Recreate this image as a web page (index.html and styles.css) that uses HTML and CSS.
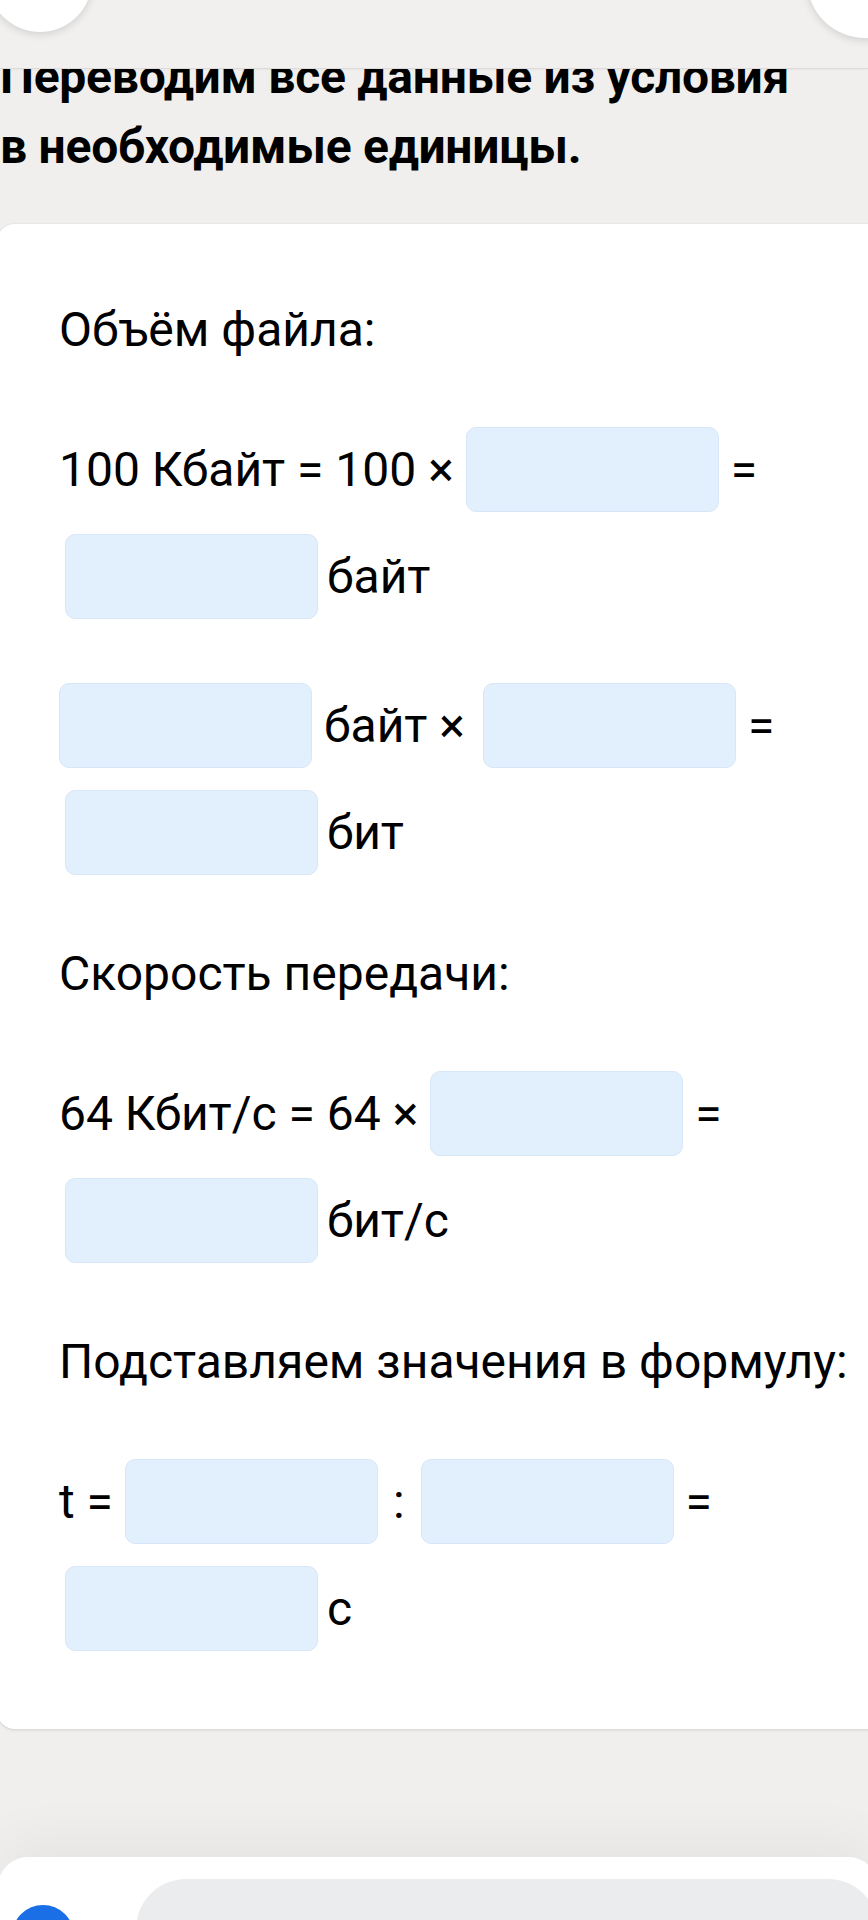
FILE: index.html
```html
<!DOCTYPE html>
<html lang="ru">
<head>
<meta charset="utf-8">
<title>Перевод единиц</title>
<link rel="stylesheet" href="styles.css">
</head>
<body>
<div class="topbar">
  <span class="circle circle-left"></span>
  <span class="circle circle-right"></span>
</div>

<h2 class="intro">Переводим все данные из условия<br>в необходимые единицы.</h2>

<section class="card">
  <p class="label">Объём файла:</p>
  <div class="eq">
    <div class="row"><span class="t">100 Кбайт = 100 ×</span><span class="blank"></span><span class="t">=</span></div>
    <div class="row cont"><span class="blank"></span><span class="t">байт</span></div>
  </div>
  <div class="eq">
    <div class="row"><span class="blank"></span><span class="t t-wide">байт ×</span><span class="blank"></span><span class="t">=</span></div>
    <div class="row cont"><span class="blank"></span><span class="t">бит</span></div>
  </div>

  <p class="label">Скорость передачи:</p>
  <div class="eq">
    <div class="row"><span class="t">64 Кбит/с = 64 ×</span><span class="blank"></span><span class="t">=</span></div>
    <div class="row cont"><span class="blank"></span><span class="t">бит/с</span></div>
  </div>

  <p class="label">Подставляем значения в формулу:</p>
  <div class="eq">
    <div class="row"><span class="t">t =</span><span class="blank"></span><span class="t colon">:</span><span class="blank"></span><span class="t">=</span></div>
    <div class="row cont"><span class="blank"></span><span class="t">с</span></div>
  </div>
</section>

<div class="bottombar">
  <span class="avatar"></span>
  <span class="pill"></span>
</div>
</body>
</html>
```

FILE: styles.css
```css
* { box-sizing: border-box; }

html, body {
  margin: 0;
  padding: 0;
}

body {
  width: 868px;
  height: 1920px;
  overflow: hidden;
  position: relative;
  background: #f0efed;
  color: #000;
  font-family: Roboto, "Noto Sans", sans-serif;
}

.topbar {
  position: absolute;
  top: 0;
  left: 0;
  width: 868px;
  height: 69px;
  background: #f1f0ee;
  border-bottom: 1px solid #dcdbd9;
  box-shadow: 0 1px 2px rgba(0, 0, 0, 0.04);
  z-index: 5;
  overflow: hidden;
}

.circle {
  position: absolute;
  background: #fff;
  border-radius: 50%;
  box-shadow: 0 2px 8px rgba(0, 0, 0, 0.14);
}

.circle-left {
  width: 104px;
  height: 104px;
  left: -12px;
  top: -72px;
}

.circle-right {
  width: 116px;
  height: 116px;
  left: 807px;
  top: -78px;
}

.intro {
  margin: 0;
  padding: 42px 0 0 0;
  font-size: 48px;
  line-height: 70px;
  font-weight: 700;
  letter-spacing: -0.25px;
  white-space: nowrap;
}

.card {
  margin: 42px 0 0 -3px;
  width: 920px;
  background: #fff;
  border-radius: 18px;
  padding: 73px 0 67px 62px;
  box-shadow: 0 0 2px rgba(0, 0, 0, 0.12), 0 2px 3px rgba(0, 0, 0, 0.06);
}

.label {
  margin: 0;
  font-size: 48px;
  line-height: 65px;
  white-space: nowrap;
}

.eq {
  margin-top: 54px;
}

.eq + .eq {
  margin-top: 42px;
}

.eq + .label {
  margin-top: 55px;
}

.row {
  display: flex;
  align-items: center;
  gap: 12px;
  height: 107px;
  font-size: 48px;
}

.row.cont {
  padding-left: 6px;
  gap: 9px;
}

.t {
  white-space: nowrap;
}

.t-wide {
  margin-right: 6px;
}

.colon {
  margin: 0 4px 0 3px;
}

.blank {
  flex: none;
  width: 253px;
  height: 85px;
  background: #e2effc;
  border: 1px solid #d8e7f8;
  border-radius: 10px;
}

.bottombar {
  margin: 128px 0 0 -2px;
  width: 880px;
  height: 65px;
  background: #fff;
  border-radius: 30px 30px 0 0;
  box-shadow: 0 -20px 50px rgba(0, 0, 0, 0.045);
  display: flex;
  align-items: flex-start;
  gap: 62px;
  padding-left: 14px;
  overflow: hidden;
}

.avatar {
  flex: none;
  margin-top: 48px;
  width: 62px;
  height: 62px;
  border-radius: 50%;
  background: #1a6fe6;
}

.pill {
  flex: 1;
  margin-top: 22px;
  height: 100px;
  border-radius: 50px;
  background: #ebecee;
}
```
